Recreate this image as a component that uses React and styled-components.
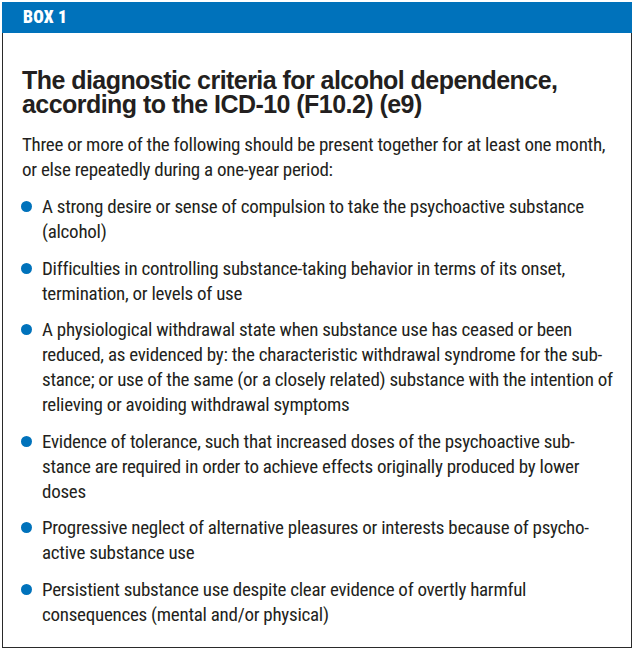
import React from "react";
import styled, { createGlobalStyle } from "styled-components";

const GlobalStyle = createGlobalStyle`
  html, body {
    margin: 0;
    padding: 0;
    background: #ffffff;
  }
`;

const colors = {
  blue: "#0072bb",
  ink: "#231f20",
  rule: "#2a2a2a",
};

const criteria = [
  [
    "A strong desire or sense of compulsion to take the psychoactive substance",
    "(alcohol)",
  ],
  [
    "Difficulties in controlling substance-taking behavior in terms of its onset,",
    "termination, or levels of use",
  ],
  [
    "A physiological withdrawal state when substance use has ceased or been",
    "reduced, as evidenced by: the characteristic withdrawal syndrome for the sub-",
    "stance; or use of the same (or a closely related) substance with the intention of",
    "relieving or avoiding withdrawal symptoms",
  ],
  [
    "Evidence of tolerance, such that increased doses of the psychoactive sub-",
    "stance are required in order to achieve effects originally produced by lower",
    "doses",
  ],
  [
    "Progressive neglect of alternative pleasures or interests because of psycho-",
    "active substance use",
  ],
  [
    "Persistient substance use despite clear evidence of overtly harmful",
    "consequences (mental and/or physical)",
  ],
];

const Frame = styled.section`
  margin: 2px 0 0 2px;
  width: 630px;
  height: 646px;
  display: flex;
  flex-direction: column;
`;

const HeaderBar = styled.header`
  height: 31px;
  background-color: ${colors.blue};
  display: flex;
  align-items: center;
  padding-left: 21px;
`;

const BoxLabel = styled.span`
  font-family: Roboto, "Liberation Sans", sans-serif;
  font-stretch: condensed;
  font-weight: 900;
  font-size: 17.5px;
  letter-spacing: 0.2px;
  color: #ffffff;
  line-height: 1;
  padding-top: 1px;
`;

const Body = styled.div`
  flex: 1;
  border: 1.5px solid ${colors.rule};
  border-top: none;
  padding: 35px 0 0 19px;
  color: ${colors.ink};
`;

const Title = styled.h2`
  margin: 0;
  font-family: "Liberation Sans", Arial, sans-serif;
  font-weight: 700;
  font-size: 25px;
  line-height: 24px;
  letter-spacing: -0.55px;
`;

const TextBlock = styled.div`
  font-family: Roboto, "Liberation Sans", sans-serif;
  font-stretch: condensed;
  font-weight: 400;
  font-size: 19px;
  line-height: 25px;
  letter-spacing: -0.27px;
`;

const Lead = styled(TextBlock)`
  margin-top: 16px;
`;

const Line = styled.span`
  display: block;
  white-space: nowrap;
`;

const List = styled.ul`
  list-style: none;
  margin: 12px 0 0;
  padding: 0;
  display: flex;
  flex-direction: column;
  gap: 11.5px;
`;

const Item = styled.li`
  display: grid;
  grid-template-columns: 20px 1fr;
`;

const Bullet = styled.span`
  width: 11px;
  height: 11px;
  margin: 7px 0 0 -1.5px;
  border-radius: 50%;
  background-color: ${colors.blue};
`;

export default function App() {
  return (
    <>
      <GlobalStyle />
      <Frame>
        <HeaderBar>
          <BoxLabel>BOX 1</BoxLabel>
        </HeaderBar>
        <Body>
          <Title>
            <Line>The diagnostic criteria for alcohol dependence,</Line>
            <Line>according to the ICD-10 (F10.2) (e9)</Line>
          </Title>
          <Lead>
            <Line>
              Three or more of the following should be present together for at
              least one month,
            </Line>
            <Line>or else repeatedly during a one-year period:</Line>
          </Lead>
          <List>
            {criteria.map((lines) => (
              <Item key={lines[0]}>
                <Bullet />
                <TextBlock>
                  {lines.map((line) => (
                    <Line key={line}>{line}</Line>
                  ))}
                </TextBlock>
              </Item>
            ))}
          </List>
        </Body>
      </Frame>
    </>
  );
}
